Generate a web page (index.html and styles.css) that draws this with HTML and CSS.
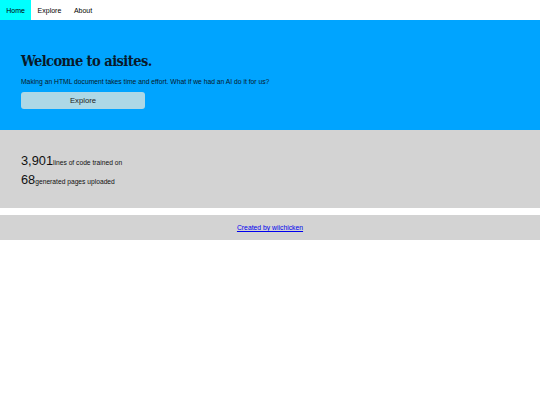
FILE: index.html
```
<!DOCTYPE html>
<html>
<head>
<meta charset="utf-8">
<link rel="stylesheet" href="styles.css">
</head>
<body>
<nav class="nav">
  <a class="nav-link active" href="#">Home</a>
  <a class="nav-link" href="#">Explore</a>
  <a class="nav-link" href="#">About</a>
</nav>
<section class="hero">
  <h1 class="hero-title">Welcome to aisites.</h1>
  <p class="hero-text">Making an HTML document takes time and effort. What if we had an AI do it for us?</p>
  <button class="hero-btn">Explore</button>
</section>
<section class="stats">
  <div class="stat"><span class="stat-num">3,901</span><span class="stat-label">lines of code trained on</span></div>
  <div class="stat"><span class="stat-num">68</span><span class="stat-label">generated pages uploaded</span></div>
</section>
<footer class="footer">
  <a class="footer-link" href="#">Created by wiichicken</a>
</footer>
</body>
</html>
```
FILE: styles.css
```
html, body { margin: 0; padding: 0; background: #fff; }
body { font-family: "Liberation Sans", Arial, sans-serif; color: #000; }
.nav { display: flex; height: 20px; background: #fff; }
.nav-link { display: flex; align-items: center; padding: 0 6.3px; font-size: 7px; color: #000; text-decoration: none; }
.nav-link.active { background: #00ffff; }
.hero { background: #00a4ff; height: 110px; padding: 10px 21px 0; box-sizing: border-box; display: flex; flex-direction: column; justify-content: center; }
.hero-title { margin: 0; font-family: "DejaVu Serif", serif; font-stretch: condensed; font-weight: bold; font-size: 14.5px; color: #08192a; letter-spacing: -0.55px; }
.hero-text { margin: 9px 0 7px; font-size: 6.75px; color: #08192a; }
.hero-btn { width: 124px; height: 17px; background: #add8e6; border: none; border-radius: 3px; font-family: "Liberation Sans", Arial, sans-serif; font-size: 7.7px; color: #222; padding: 0; }
.stats { background: #d3d3d3; height: 78px; padding: 23px 21px 0; box-sizing: border-box; display: flex; flex-direction: column; gap: 4px; }
.stat { display: flex; align-items: baseline; }
.stat-num { font-size: 12.8px; color: #111; }
.stat-label { font-size: 6.7px; color: #111; }
.footer { margin-top: 7px; background: #d3d3d3; height: 25px; display: flex; align-items: center; justify-content: center; }
.footer-link { font-size: 6.8px; color: #0000ee; }
```
